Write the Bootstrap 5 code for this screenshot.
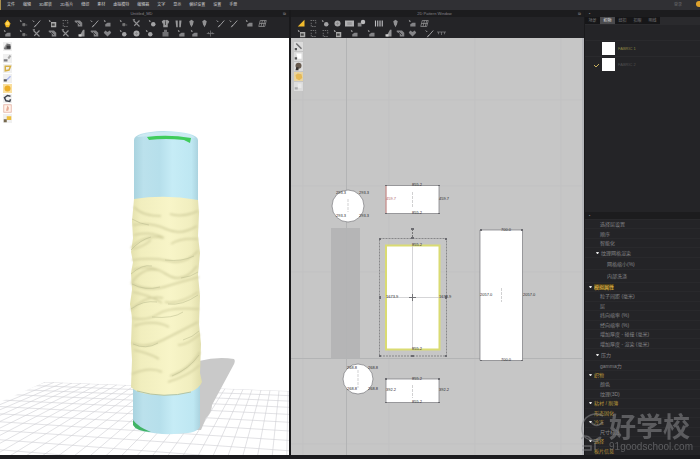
<!DOCTYPE html>
<html lang="zh-CN">
<head>
<meta charset="utf-8">
<meta name="viewport" content="width=device-width, initial-scale=1">
<title>Untitled_MD</title>
<link href="https://cdn.jsdelivr.net/npm/bootstrap@5.3.0/dist/css/bootstrap.min.css" rel="stylesheet">
<style>
:root{--ui:"Liberation Sans","Noto Sans CJK SC",sans-serif}
body{font:4px/6px var(--ui);background:#242427;color:#a2a2a5;height:100vh}
button,input{font:inherit;color:inherit;background:none;border:0;padding:0}
a{color:inherit;text-decoration:none}
.menubar{height:10px;background:#303034;border-left:1px solid #a98f4e;padding:0 0 1px 6px;color:#d0d0d3}
.menubar .items{gap:8px}
.signin{color:#69696c;margin-right:13px}
.corner{width:5px;height:7px}
.workspace{display:grid;grid-template-columns:291fr 293fr 116px;min-height:0}
.pane{min-width:0;min-height:0}
.pane3d{border-right:2px solid #19191b}
.titlebar{height:7px;background:#1c1c1e;color:#858588;padding-right:3px}
.tools{height:21px;background:#242427;padding:1px}
.tools .line{height:10px;gap:3px}
.tools button{width:13px;height:10px;line-height:0}
.tools svg{width:11px;height:9px}
.pane2d .tools{padding-left:4px}
.pane2d .line{gap:5px}
.pane2d .tools button{width:12px}
.scene{height:0;min-height:0}
.view{background:#fff}
.pane2d .view{background:#c6c6c6;border-right:2px solid #b5b6ba}
.palette{position:absolute;top:4px;left:3px;gap:1px}
.palette button{width:9px;height:9px;line-height:0;background:#f0f0f0}
.palette svg{width:9px;height:9px}
.pane2d .palette button{background:#dcdcdc}
.pane3d .palette button:first-child{margin-bottom:2px}
.side{border-left:1px solid #1a1a1c}
.tabs{background:#2a2a2d;height:8px}
.tabs button{width:15px;height:7px;background:#161618;color:#77777a}
.tabs .active{background:#4a4a4d;color:#e3e3e3}
.fabrics{height:187px;padding-top:15px}
.fabric{height:16px;padding-left:11px;gap:3px;border-top:1px solid #2a2a2d;font-size:4px;color:#4f4f50}
.fabric .tick{width:3px;height:6px}
.fabric .swatch{width:13px;height:13px;background:#fff}
.fabric.chosen{color:#8d8544}
.props{min-height:0}
.prop{flex:3 1 0;min-height:0;padding-left:15px;border-top:1px solid #29292c;color:#858588;font-size:5px;display:flex;align-items:center;white-space:nowrap}
.prop.tall{flex-grow:4}
.prop.deep{padding-left:22px}
.prop.branch{padding-left:11px}
.prop.head{padding-left:9px;color:#bb983a}
.prop.head.open{padding-left:4px}
.prop.open::before{content:"";border:1px solid transparent;border-top:2px solid #e8e8e8;border-bottom:0;width:3px;height:2px;margin-right:2px}
.prop.head.lit span{background:#4c4019;color:#f0c552}
.foot{height:4px;background:#1b1b1e}
.brandmark{position:absolute;right:7px;bottom:6px;color:#8a8b8e;opacity:.55;gap:4px;pointer-events:none}
.brandmark svg{width:24px;height:40px}
.brandmark strong{font:700 27px/31px "Noto Sans CJK SC",sans-serif}
.brandmark span{font:10px/12px var(--ui)}
.dim{font:4px var(--ui);fill:#29292b}
</style>
</head>
<body class="d-flex flex-column overflow-hidden position-relative">
<svg width="0" height="0" class="position-absolute" aria-hidden="true">
<defs>
<g id="i-arrow"><path d="M6 1 10 6 8 11H4L2 6Z" fill="#f1b51f"/><path d="M4 4H8V8H4Z" fill="#ffd556"/></g>
<g id="i-tri"><path d="M10 1V10H1Z" fill="#f0ba2c"/></g>
<g id="i-node"><path d="M1 1 4 3 2 4Z" fill="#aaa"/><path d="M5 6H8V9H5ZM9 8H11" fill="#777" stroke="#777"/></g>
<g id="i-pen"><path d="M1 2 3 4M4 10 11 2M3 11 5 8" stroke="#a8a8aa" stroke-width="1.200" fill="none"/></g>
<g id="i-box"><path d="M1 1 4 3 2 4Z" fill="#bbb"/><path d="M4 4H11V11H4Z" fill="#aaa"/><path d="M5 6H9V9H5Z" fill="#444"/></g>
<g id="i-open"><path d="M2 2H9V6M3 5V10H10" stroke="#858587" stroke-dasharray="2 1" fill="none"/></g>
<g id="i-fold"><path d="M1 2H8L11 5V10H5V6L1 4Z" fill="#828285"/><path d="M4 4 8 8" stroke="#272729"/></g>
<g id="i-cross"><path d="M2 2 10 10M10 2 3 9M1 1H4" stroke="#929294" stroke-width="1.500" fill="none"/></g>
<g id="i-shirt"><path d="M1 3 4 1 6 2 8 1 11 3 10 6H9V11H3V6H2Z" fill="#99999b"/><path d="M6 3V8" stroke="#333"/></g>
<g id="i-trousers"><path d="M2 2H5V11H3ZM7 2H10L9 11H7Z" fill="#98989a"/></g>
<g id="i-ball"><circle cx="6" cy="6" r="4" fill="#a8a8aa"/><path d="M4 6H8M6 4V8" stroke="#888"/></g>
<g id="i-pin"><path d="M3 3 6 1 9 3 8 7 6 11 4 7Z" fill="#919193"/></g>
<g id="i-point"><path d="M1 1 4 3 2 4Z" fill="#aaa"/><circle cx="7" cy="7" r="3" fill="#a2a2a4"/></g>
<g id="i-grid"><path d="M3 2H11L9 10H1ZM2 6H10M6 2 4 10M9 2 7 10" stroke="#909092" fill="none"/></g>
<g id="i-rect"><path d="M0 2H12V10H0Z" fill="#b0b0b2"/><path d="M3 4H9V8H3Z" fill="#98989a"/></g>
<g id="i-two"><path d="M1 5H6V10H1Z" fill="#88888a"/><circle cx="8" cy="4" r="3" fill="#bababc"/></g>
<g id="i-bars"><path d="M2 2V10M5 2V10M8 2V10M11 2V10" stroke="#bdbdc0" stroke-width="1.500"/></g>
<g id="i-iron"><path d="M1 1 4 3 2 4Z" fill="#aaa"/><path d="M3 10V7L6 5H10V10Z" fill="#838386"/></g>
<g id="i-wedge"><path d="M3 10 8 1H10V10Z" fill="#929294"/><path d="M2 7H6V10H2Z" fill="#d0d0d0"/></g>
<g id="i-heart"><path d="M6 10 1 5 3 2 6 4 9 2 11 5Z" fill="#858588"/></g>
<g id="i-weight"><path d="M4 1H8V4H10V10H2V4H4Z" fill="#727275"/></g>
<g id="i-tape"><path d="M0 4H12M2 4V7M6 4V8M10 4V7" stroke="#7d7d80" fill="none"/></g>
<g id="i-cut"><path d="M1 6H11M6 2V10M3 4 4 7M8 4 9 7" stroke="#77777a" fill="none"/></g>
<g id="p-mesh"><path d="M1 8 5 2 10 3V10H2Z" fill="#78787a"/><path d="M5 5H10V9H5Z" fill="#3d3d3f"/><path d="M5 2 2 8" stroke="#bbb"/></g>
<g id="p-brush"><path d="M6 5 9 1 11 3 8 7Z" fill="#aaa"/><path d="M1 7H6V10H1Z" fill="#7c7c80"/></g>
<g id="p-loop"><path d="M3 3H10L8 8 3 9Z" fill="none" stroke="#d6af45" stroke-width="2"/></g>
<g id="p-blue"><path d="M4 9 10 3" stroke="#a9b8ef" stroke-width="2"/><path d="M1 7H5V10H1Z" fill="#565659"/></g>
<g id="p-gold"><path d="M0 0H12V12H0Z" fill="#f9dfa0"/><circle cx="6" cy="6" r="4" fill="#ecae28"/></g>
<g id="p-hand"><path d="M0 0H12V12H0Z" fill="#e9d4a0"/><path d="M2 4 5 2 10 3 11 8 7 11 3 9Z" fill="#e5b956"/></g>
<g id="p-dark"><path d="M10 3 6 2 2 5 4 9 9 10 10 7" fill="none" stroke="#3e424c" stroke-width="2"/></g>
<g id="p-body"><path d="M1 1H11V11H1Z" fill="#fff3ea" stroke="#e9b0a0"/><path d="M6 2 8 5 7 9H4L5 5Z" fill="#e6ab97"/></g>
<g id="p-spray"><path d="M5 3H11V8H5Z" fill="#eebf3d"/><path d="M1 7H5V11H1Z" fill="#76684d"/></g>
<g id="p-needle"><path d="M3 2 10 9" stroke="#6f6f71" stroke-width="2"/><path d="M1 8H4V11H1Z" fill="#555"/></g>
<g id="p-page"><path d="M3 2H10V9H5Z" fill="#fff"/><path d="M1 7H4V10H1Z" fill="#555"/></g>
<g id="p-head"><circle cx="6" cy="5" r="4" fill="#66594d"/><path d="M3 7H6V11H2Z" fill="#35322f"/></g>
<g id="p-soft"><path d="M5 2H10V8H5Z" fill="#e9e9e9"/><path d="M1 7H5V10H1Z" fill="#aaa"/></g>
<linearGradient id="skin"><stop stop-color="#a9d3df"/><stop offset=".15" stop-color="#bbe1ec"/><stop offset=".4" stop-color="#b6dfeb"/><stop offset=".6" stop-color="#c6ecf6"/><stop offset=".9" stop-color="#bee7f2"/><stop offset="1" stop-color="#abd3df"/></linearGradient>
<linearGradient id="cloth"><stop stop-color="#e3e0ac"/><stop offset=".15" stop-color="#f1eebe"/><stop offset=".55" stop-color="#f8f5c8"/><stop offset=".85" stop-color="#f1eebf"/><stop offset="1" stop-color="#dfdcaa"/></linearGradient>
<filter id="fuzzy" x="-20%" y="-20%" width="140%" height="140%"><feGaussianBlur stdDeviation="1"/></filter>
</defs>
</svg>

<nav class="menubar d-flex align-items-center flex-shrink-0" aria-label="主菜单">
<div class="items d-flex flex-fill text-nowrap">
<a href="#">文件</a><a href="#">编辑</a><a href="#">3D服装</a><a href="#">2D板片</a><a href="#">缝纫</a><a href="#">素材</a><a href="#">虚拟模特</a><a href="#">编辑器</a><a href="#">文字</a><a href="#">显示</a><a href="#">偏好设置</a><a href="#">设置</a><a href="#">手册</a>
</div>
<a href="#" class="signin">登录</a>
<svg class="corner" viewBox="0 0 5 7" aria-hidden="true"><circle cx="4" cy="3" r="3" fill="#e0a32d"/></svg>
</nav>

<main class="workspace flex-fill">
<section class="pane pane3d d-flex flex-column">
<header class="titlebar d-flex align-items-center flex-shrink-0"><span class="flex-fill text-center">Untitled_MD</span><span>⧉</span></header>
<div class="tools flex-shrink-0">
<div class="line d-flex" data-icons="arrow|node pen|box open fold|pen iron|node cross|point shirt trousers pin pin|pen pen|iron grid"></div>
<div class="line d-flex" data-icons="iron|node cross|fold cross|wedge fold heart|point ball point|weight|iron iron|cut"></div>
</div>
<div class="view position-relative d-flex flex-column flex-fill">
<svg class="scene flex-fill w-100" viewBox="0 38 289 417" preserveAspectRatio="xMidYMax slice" role="img" aria-label="3D 服装">
<clipPath id="floor"><path d="M45 382 289 391V456H0V402Z"/></clipPath>
<g id="mesh" clip-path="url(#floor)" stroke="#cfcfd3" stroke-width=".6"></g>
<path d="M199 361Q218 356 234 359Q236 361 233 366L212 405Q212 412 206 418L201 430H196Z" fill="#c9c9c9"/>
<path d="M133 385H200V424Q201 431 188 433Q162 436 142 431Q134 429 133 424Z" fill="url(#skin)"/>
<path d="M133 420Q138 427 151 432Q136 431 133 425Z" fill="#41b465"/>
<path d="M134 140Q134 132 164 131Q197 132 198 140V205H134Z" fill="url(#skin)"/>
<path d="M137 137Q143 132 165 132Q190 132 195 138Q170 134 137 137Z" fill="#cceaf2"/>
<path d="M147 137Q168 134 191 138L190 143 184 140Q165 138 149 140Z" fill="#40cc5b"/>
<path d="M134 199Q165 194 198 200L199 213 198 236 200 253 198 275 200 296 199 324 201 344 200 373 202 382Q199 389 190 392Q168 397 147 394Q135 392 131 387L132 360 131 343 132 318 130 304 132 290 131 273 133 262 131 252 133 238 132 221Z" fill="url(#cloth)"/>
<g fill="none" stroke="#d2cf9e" stroke-width="1.500" filter="url(#fuzzy)">
<path d="M134 207Q142 216 161 216M198 211Q182 218 170 214M133 225Q151 222 166 229T197 226M134 235Q152 231 164 238M131 248Q144 234 163 238M133 249Q143 247 151 240M198 239Q180 238 171 244M132 260Q153 257 169 261T198 251M133 270Q149 263 166 274T197 266M132 282Q143 267 157 270M131 283Q148 292 164 287T199 277M133 292Q152 296 162 303M198 292Q179 305 165 302M131 310Q147 294 163 298M132 318Q148 321 158 314T199 309M134 326Q154 319 169 327M132 343Q145 349 163 340T198 322M134 350Q149 353 159 359M200 334Q188 345 178 345M132 374Q150 366 162 372M200 352Q189 370 170 376M200 365Q188 376 168 382"/>
</g>
<g fill="none" stroke="#b4b588" stroke-width=".8" opacity=".6">
<path d="M131 250Q140 240 151 237M131 274Q142 264 152 266M132 284Q145 291 160 287M165 260Q182 262 194 256M168 304Q182 306 198 295M131 309Q143 300 157 302M133 344Q146 350 158 343M183 340Q193 337 199 331M172 376Q189 369 199 355M132 219Q140 224 149 225M152 317Q173 319 183 312M181 278Q191 277 198 272"/>
</g>
<path d="M137 391Q164 399 191 392" fill="none" stroke="#b5c4a2"/>
</svg>
<div class="palette d-flex flex-column" data-palette="mesh brush loop blue gold dark body spray"></div>
</div>
</section>

<section class="pane pane2d d-flex flex-column">
<header class="titlebar d-flex align-items-center flex-shrink-0"><span class="flex-fill text-center">2D Pattern Window</span><span>⧉</span></header>
<div class="tools flex-shrink-0">
<div class="line d-flex" data-icons="tri open point ball rect two|bars|pin|iron grid"></div>
<div class="line d-flex" data-icons="box open open box|iron|iron|wedge fold heart|pen tape"></div>
</div>
<div class="view position-relative d-flex flex-column flex-fill">
<svg class="scene flex-fill w-100" viewBox="291 38 291 417" preserveAspectRatio="xMidYMid slice" role="img" aria-label="2D 板片">
<path d="M303 38V455M389 38V455M475 38V455M561 38V455M291 100H583M291 186H583M291 272H583M291 444H583" stroke="#c1c1c2" fill="none"/>
<path d="M331 228H360V359H331Z" fill="#b5b5b6"/>
<path d="M346.500 38V455M291 358.500H583" stroke="#b3b4b5" fill="none"/>
<g fill="#fff" stroke="#77777b" stroke-width=".7">
<circle cx="348" cy="206" r="16"/><circle cx="358" cy="379" r="15"/>
<path d="M386 185.500H439V213.500H386ZM386 379H439V402.500H386ZM480 230H522.500V360.500H480Z"/>
</g>
<path d="M386 186V213" stroke="#e29b96"/>
<path d="M386 245.500H439.500V349.500H386Z" fill="#fff" stroke="#dadb72" stroke-width="2"/>
<path d="M379.500 238.500H446.500V356H379.500Z" fill="none" stroke="#77777a" stroke-width=".8" stroke-dasharray="2 1"/>
<path d="M412.500 229V239" stroke="#777" stroke-dasharray="2 1"/>
<path d="M412.500 246V349M380 297.500H446" stroke="#c3c3c6" stroke-width=".7"/>
<path d="M409 297.500H416M412.500 294V301" stroke="#727276"/>
<path d="M348 199V212M412.500 192V208M412.500 385V398M501.500 288V302M358 370V388" stroke="#bdbdbf" stroke-dasharray="3 1" stroke-width=".7"/>
<path d="M379 238h2v2h-2zM445 238h2v2h-2zM379 355h2v2h-2zM445 355h2v2h-2zM411 228h3v2h-3zM411 237h3v2h-3zM379 296h2v3h-2zM445 296h2v3h-2zM411 355h3v2h-3zM385 185h2v1h-2zM438 185h2v1h-2zM385 213h2v1h-2zM438 213h2v1h-2zM385 378h2v2h-2zM438 378h2v2h-2zM385 402h2v1h-2zM438 402h2v1h-2zM480 229h2v2h-2zM521 229h2v2h-2zM480 360h2v1h-2zM521 360h2v1h-2z" fill="#6b6b70"/>
<g class="dim">
<text x="336" y="194">293.3</text><text x="359" y="194">293.3</text><text x="336" y="217">293.3</text><text x="359" y="217">293.3</text>
<text x="412" y="186">855.2</text><text x="412" y="214">855.2</text><text x="386" y="200" fill="#b06969">459.7</text><text x="439" y="200">459.7</text>
<text x="412" y="246">855.2</text><text x="412" y="350">855.2</text><text x="386" y="298">1673.9</text><text x="439" y="298">1673.9</text>
<text x="501" y="231">700.0</text><text x="501" y="361">700.0</text><text x="480" y="296">2057.0</text><text x="523" y="296">2057.0</text>
<text x="347" y="369">268.8</text><text x="368" y="369">268.8</text><text x="347" y="390">268.8</text><text x="368" y="390">268.8</text>
<text x="412" y="380">855.2</text><text x="412" y="403">855.2</text><text x="386" y="391">392.2</text><text x="439" y="391">392.2</text>
</g>
</svg>
<div class="palette d-flex flex-column" data-palette="needle page head hand soft"></div>
</div>
</section>

<aside class="pane side d-flex flex-column">
<header class="titlebar d-flex align-items-center flex-shrink-0 ps-1">▪</header>
<div class="tabs d-flex flex-shrink-0" role="tablist">
<button type="button" role="tab">场景</button><button type="button" role="tab" class="active" aria-selected="true">织物</button><button type="button" role="tab">纽扣</button><button type="button" role="tab">扣眼</button><button type="button" role="tab">明线</button>
</div>
<div class="fabrics flex-shrink-0">
<div class="fabric chosen d-flex align-items-center"><span class="tick"></span><span class="swatch"></span><span>FABRIC 1</span></div>
<div class="fabric d-flex align-items-center"><svg class="tick overflow-visible" viewBox="0 0 3 6" aria-hidden="true"><path d="M-2 3 0 5 3 2" fill="none" stroke="#c9b15e"/></svg><span class="swatch"></span><span>FABRIC 2</span></div>
</div>
<header class="titlebar d-flex align-items-center flex-shrink-0 ps-1">▪</header>
<div class="props d-flex flex-column flex-fill">
<div class="prop">选择层设置</div><div class="prop">顺序</div><div class="prop">智能化</div>
<div class="prop branch open">纹理网格渲染</div><div class="prop tall deep">网格缩小(%)</div><div class="prop tall deep">内部洗涤</div>
<div class="prop head open lit"><span>模拟属性</span></div><div class="prop">粒子间距 (毫米)</div><div class="prop">层</div><div class="prop">纬向缩率 (%)</div><div class="prop">经向缩率 (%)</div><div class="prop">增加厚度 - 碰撞 (毫米)</div><div class="prop">增加厚度 - 渲染 (毫米)</div>
<div class="prop tall branch open">压力</div><div class="prop">gamma力</div>
<div class="prop head open">织物</div><div class="prop">颜色</div><div class="prop">纹理(3D)</div><div class="prop head open">粘衬 / 削薄</div><div class="prop head">形态固化</div><div class="prop head open">冷冻</div><div class="prop">尺寸标注</div><div class="prop head open">选择</div><div class="prop head">板片信息</div>
</div>
</aside>
</main>
<footer class="foot flex-shrink-0"></footer>
<div class="brandmark d-flex align-items-center">
<svg viewBox="0 0 24 40" aria-hidden="true" fill="none" stroke="currentColor" stroke-width="1.500"><path d="M22 4A14 14 0 0 0 5 26Q12 31 19 25M0 27Q5 21 10 27T20 25M1 34H10V38H1M14 31V38M10 10Q15 17 22 10"/></svg>
<div class="d-flex flex-column"><strong>好学校</strong><span>91goodschool.com</span></div>
</div>

<script src="https://cdn.jsdelivr.net/npm/bootstrap@5.3.0/dist/js/bootstrap.bundle.min.js"></script>
<script>
const button = (prefix, name) => `<button type="button" aria-label="${name}"><svg viewBox="0 0 12 12" aria-hidden="true"><use href="#${prefix}-${name}"/></svg></button>`;
document.querySelectorAll('[data-icons]').forEach(line => {
  line.innerHTML = line.dataset.icons.split('|').map(group => `<div class="d-flex">${group.split(' ').map(n => button('i', n)).join('')}</div>`).join('');
});
document.querySelectorAll('[data-palette]').forEach(col => {
  col.innerHTML = col.dataset.palette.split(' ').map(n => button('p', n)).join('');
});
// Floor lines run towards two vanishing points: (290, 285) and (-1500, 325).
let lines = '';
for (let x = 45; x < 300; x += 9) {
  const y = 382 + (x - 45) * 0.037;
  const k = 175 / (y - 285);
  lines += `<path d="M${x} ${y}L${290 + (x - 290) * k} 460"/>`;
}
for (let y = 382, step = 4; y < 460; y += step, step += 0.7) {
  const slope = (y - 325) / 1545;
  lines += `<path d="M0 ${y - 45 * slope}L290 ${y + 245 * slope}"/>`;
}
document.getElementById('mesh').innerHTML = lines;
</script>
</body>
</html>
